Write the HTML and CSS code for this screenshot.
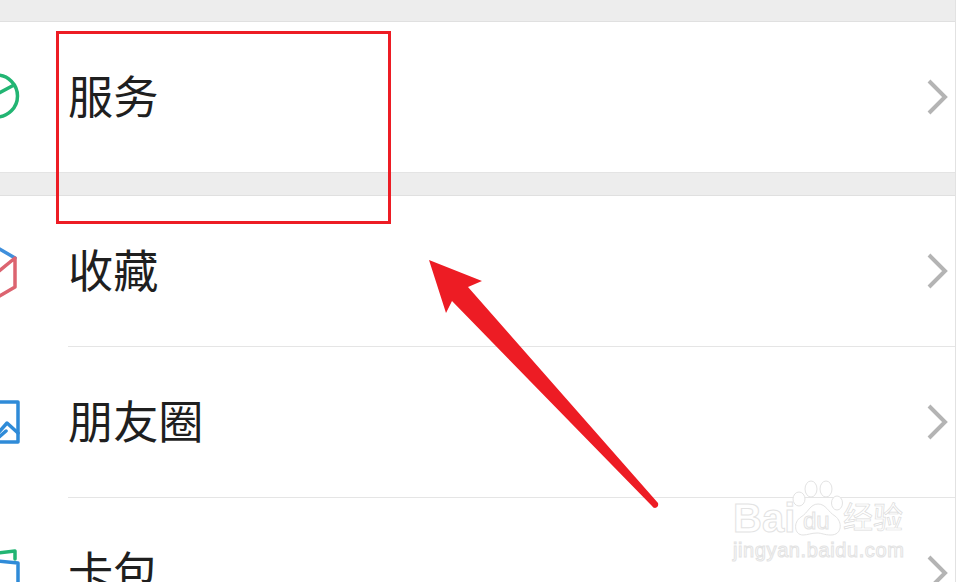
FILE: index.html
```html
<!DOCTYPE html>
<html lang="zh-CN">
<head>
  <meta charset="UTF-8">
  <title>服务</title>
  <link rel="stylesheet" href="styles.css">
</head>
<body>
  <div class="page">
    <div class="band band-top"></div>

    <div class="row">
      <svg class="icon" viewBox="0 0 68 150">
        <circle cx="-3.500" cy="74" r="21" stroke="#22b573"></circle>
        <path d="M-3 72 L14 63" stroke="#22b573"></path>
      </svg>
      <div class="row-body last">
        <span class="label">服务</span>
        <svg class="chevron" viewBox="0 0 22 36"><path d="M3 2 L19 18 L3 34"></path></svg>
      </div>
    </div>

    <div class="band"></div>

    <div class="row">
      <svg class="icon" viewBox="0 0 68 151">
        <path d="M-2 52 L15 62" stroke="#3f8fdc"></path>
        <path d="M-2 76 L15 62 L15 91 L-2 101" stroke="#dc6470"></path>
      </svg>
      <div class="row-body">
        <span class="label">收藏</span>
        <svg class="chevron" viewBox="0 0 22 36"><path d="M3 2 L19 18 L3 34"></path></svg>
      </div>
    </div>

    <div class="row">
      <svg class="icon" viewBox="0 0 68 151">
        <path d="M-2 55 L18 55 L18 95 L-2 95" stroke="#2f8bd8"></path>
        <path d="M-2 86 L7 76 L18 86 M-2 91 L6 84" stroke="#2f8bd8"></path>
      </svg>
      <div class="row-body">
        <span class="label">朋友圈</span>
        <svg class="chevron" viewBox="0 0 22 36"><path d="M3 2 L19 18 L3 34"></path></svg>
      </div>
    </div>

    <div class="row">
      <svg class="icon" viewBox="0 0 68 151">
        <path d="M-2 55 L15 53 L15 61" stroke="#22b573"></path>
        <path d="M-2 63 L18 65 L18 100" stroke="#2f8bd8"></path>
      </svg>
      <div class="row-body">
        <span class="label">卡包</span>
        <svg class="chevron" viewBox="0 0 22 36"><path d="M3 2 L19 18 L3 34"></path></svg>
      </div>
    </div>
  </div>

  <div class="mark-box"></div>
  <svg class="mark-arrow" viewBox="0 0 957 582">
    <path d="M429 260 L482 281 L468 287 L658 503 Q659 507 655 508 Q653 508 652 506 L452 301 L446 313 Z"></path>
  </svg>

  <div class="watermark">
    <div class="wm-top">
      <span class="wm-bai">Bai</span>
      <div class="wm-paw">
        <svg viewBox="0 0 56 58">
          <ellipse cx="9" cy="19" rx="6" ry="7"></ellipse>
          <ellipse cx="21" cy="9" rx="6" ry="8"></ellipse>
          <ellipse cx="36" cy="9" rx="6" ry="8"></ellipse>
          <ellipse cx="47" cy="23" rx="5.500" ry="7"></ellipse>
          <path d="M28 24 C36 24 38 32 45 36 C53 42 52 55 41 55 C34 55 32 53 27 53 C21 53 18 55 13 55 C4 55 3 42 11 37 C18 33 20 24 28 24 Z"></path>
        </svg>
        <span class="wm-du">du</span>
      </div>
      <span class="wm-cn">经验</span>
    </div>
    <div class="wm-url">jingyan.baidu.com</div>
  </div>
</body>
</html>
```

FILE: styles.css
```css
html, body {
  margin: 0;
  height: 582px;
  overflow: hidden;
  background: #fff;
}
.page {
  width: 955px;
  height: 582px;
  border-right: 1px solid #e2e2e2;
  font-family: "Noto Sans CJK SC", sans-serif;
}
.band {
  height: 24px;
  box-sizing: border-box;
  background: #ededed;
  border-top: 1px solid #e4e4e4;
  border-bottom: 1px solid #e0e0e0;
}
.band-top {
  height: 22px;
  border-top: none;
}
.row {
  display: flex;
  height: 151px;
}
.row:nth-child(2) {
  height: 150px;
}
.icon {
  width: 68px;
  height: 100%;
  flex: none;
  overflow: hidden;
  fill: none;
  stroke-width: 3.500;
  stroke-linejoin: round;
  stroke-linecap: round;
}
.row-body {
  flex: 1;
  display: flex;
  align-items: center;
  justify-content: space-between;
  padding-right: 7px;
  border-bottom: 1px solid #e5e5e5;
}
.row-body.last {
  border-bottom: none;
}
.label {
  font-size: 45.200px;
  line-height: 58px;
  padding-bottom: 4px;
  color: #1f1f1f;
}
.chevron {
  width: 22px;
  height: 36px;
  fill: none;
  stroke: #b4b4b4;
  stroke-width: 4;
}
.mark-box {
  position: absolute;
  left: 56px;
  top: 31px;
  width: 329px;
  height: 187px;
  border: 3px solid #ed1c24;
}
.mark-arrow {
  position: absolute;
  left: 0;
  top: 0;
  width: 957px;
  height: 582px;
  fill: #ed1c24;
}
.watermark {
  position: absolute;
  left: 733px;
  top: 480px;
  width: 175px;
  font-family: "Liberation Sans", sans-serif;
  color: #fff;
  -webkit-text-stroke: 1px #e3e3e3;
}
.wm-top {
  display: flex;
  align-items: flex-end;
  height: 58px;
}
.wm-bai {
  width: 57px;
  flex: none;
  font-size: 40px;
  line-height: 40px;
  font-weight: bold;
}
.wm-paw {
  position: relative;
  width: 56px;
  height: 58px;
  flex: none;
}
.wm-paw svg {
  width: 56px;
  height: 58px;
  fill: #fff;
  stroke: #e3e3e3;
  stroke-width: 1;
}
.wm-du {
  position: absolute;
  left: 13px;
  bottom: 4px;
  font-size: 24px;
  line-height: 26px;
}
.wm-cn {
  flex: none;
  margin-left: -3px;
  font-family: "Noto Sans CJK SC", sans-serif;
  font-size: 30px;
  line-height: 46px;
  white-space: nowrap;
  -webkit-text-stroke: 0.700px #dcdcdc;
}
.wm-url {
  font-size: 20px;
  line-height: 24px;
  letter-spacing: 0.600px;
}
```
